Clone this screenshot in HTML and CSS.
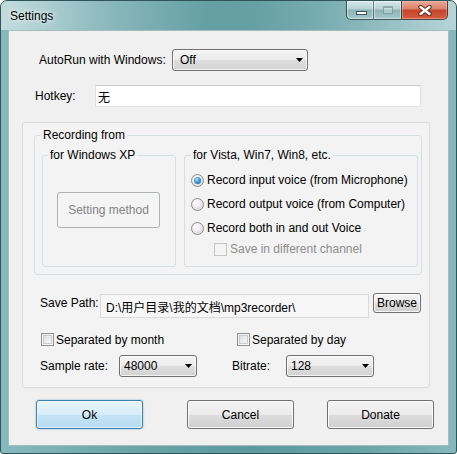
FILE: index.html
```html
<!DOCTYPE html>
<html>
<head>
<meta charset="utf-8">
<title>Settings</title>
<link rel="stylesheet" href="styles.css">
</head>
<body>
<div class="window">
  <div class="titlebar">
    <span class="title">Settings</span>
    <div class="caption">
      <span class="cbtn cmin"><span class="min-glyph"></span></span>
      <span class="cbtn cmax"><span class="max-glyph"></span></span>
      <span class="cbtn cclose">
        <svg width="14" height="11" viewBox="0 0 14 11">
          <path d="M2.5 2 L11.5 9 M11.5 2 L2.5 9" stroke="#5a2a22" stroke-width="4.4" stroke-linecap="round"/>
          <path d="M2.5 2 L11.5 9 M11.5 2 L2.5 9" stroke="#ffffff" stroke-width="2.4" stroke-linecap="round"/>
        </svg>
      </span>
    </div>
  </div>
  <div class="client">
    <div class="row autorun">
      <span class="lbl lbl-autorun">AutoRun with Windows:</span>
      <div class="combo combo-autorun"><span>Off</span><svg class="arrow" width="7" height="4" viewBox="0 0 7 4"><polygon points="0,0 7,0 3.5,4" fill="#000"/></svg></div>
    </div>
    <div class="row hotkey">
      <span class="lbl lbl-hotkey">Hotkey:</span>
      <div class="textbox hotkey-box">无</div>
    </div>
    <div class="panel">
      <div class="group group-main">
        <span class="gtitle main-title">Recording from</span>
        <div class="subrow">
          <div class="group sub-xp">
            <span class="gtitle xp-title">for Windows XP</span>
            <div class="setting-btn">Setting method</div>
          </div>
          <div class="group sub-vista">
            <span class="gtitle vista-title">for Vista, Win7, Win8, etc.</span>
            <div class="opt opt-first"><span class="radio on"><span class="dot"></span></span><span>Record input voice (from Microphone)</span></div>
            <div class="opt"><span class="radio"></span><span>Record output voice (from Computer)</span></div>
            <div class="opt"><span class="radio"></span><span>Record both in and out Voice</span></div>
            <div class="opt sub-check"><span class="cb disabled"></span><span class="disabled-text">Save in different channel</span></div>
          </div>
        </div>
      </div>
      <div class="save-row">
        <span class="lbl lbl-save">Save Path:</span>
        <div class="textbox path-box">D:\用户目录\我的文档\mp3recorder\</div>
        <div class="btn browse">Browse</div>
      </div>
      <div class="checks-row">
        <div class="check-item check-month"><span class="cb"></span><span>Separated by month</span></div>
        <div class="check-item"><span class="cb"></span><span>Separated by day</span></div>
      </div>
      <div class="sample-row">
        <span class="lbl lbl-sample">Sample rate:</span>
        <div class="combo combo-sample"><span>48000</span><svg class="arrow" width="7" height="4" viewBox="0 0 7 4"><polygon points="0,0 7,0 3.5,4" fill="#000"/></svg></div>
        <span class="lbl lbl-bitrate">Bitrate:</span>
        <div class="combo combo-bitrate"><span>128</span><svg class="arrow" width="7" height="4" viewBox="0 0 7 4"><polygon points="0,0 7,0 3.5,4" fill="#000"/></svg></div>
      </div>
    </div>
    <div class="buttons">
      <div class="btn big btn-ok">Ok</div>
      <div class="btn big btn-cancel">Cancel</div>
      <div class="btn big btn-donate">Donate</div>
    </div>
  </div>
</div>
</body>
</html>
```
FILE: styles.css
```css
* { box-sizing: border-box; }

body {
  margin: 0;
  font-family: "Liberation Sans", Arial, "Noto Sans CJK SC", sans-serif;
  font-size: 12px;
  color: #000;
  background: #ffffff;
}

.window {
  width: 457px;
  height: 454px;
  border: 1px solid #2f5459;
  border-radius: 7px 7px 3px 3px;
  background: linear-gradient(to right, #86b9bd 0%, #6aa4a9 30%, #5c9a9f 55%, #6aa5aa 80%, #86b9bd 100%);
  padding: 0 7px 7px 7px;
  display: flex;
  flex-direction: column;
  overflow: hidden;
}

.titlebar {
  height: 29px;
  margin: 0 -7px;
  padding: 0 8px 0 9px;
  display: flex;
  align-items: flex-start;
  background: linear-gradient(to right, rgba(255,255,255,0.5) 0%, rgba(255,255,255,0.22) 20%, rgba(255,255,255,0.02) 45%, rgba(255,255,255,0.12) 70%, rgba(255,255,255,0.4) 100%);
}

.title {
  margin-top: 8px;
  line-height: 15px;
  font-size: 12px;
  color: #000;
  text-shadow: 0 0 5px rgba(255,255,255,0.95), 0 0 9px rgba(255,255,255,0.7);
}

.caption {
  margin-left: auto;
  display: flex;
}

.cbtn {
  height: 19px;
  border: 1px solid rgba(28, 52, 56, 0.8);
  border-top: none;
  display: flex;
  align-items: center;
  justify-content: center;
}

.cmin {
  width: 27px;
  border-right: none;
  border-radius: 0 0 0 5px;
  background: linear-gradient(#d9eaeb 0%, #b6d1d3 45%, #8db3b6 50%, #a5c8cb 100%);
  box-shadow: inset 0 0 0 1px rgba(255,255,255,0.45);
}

.cmax {
  width: 28px;
  border-right: none;
  border-left-color: rgba(28, 52, 56, 0.55);
  background: linear-gradient(#d9eaeb 0%, #b6d1d3 45%, #8db3b6 50%, #a5c8cb 100%);
  box-shadow: inset 0 0 0 1px rgba(255,255,255,0.45);
}

.cclose {
  width: 47px;
  border-radius: 0 0 5px 0;
  background: linear-gradient(#eba999 0%, #dc8068 45%, #c5432a 50%, #d65c3c 100%);
  box-shadow: inset 0 0 0 1px rgba(255,200,190,0.45);
}

.min-glyph {
  width: 11px;
  height: 4px;
  margin-top: 6px;
  margin-left: 2px;
  background: #ffffff;
  border: 1px solid #3c5357;
}

.max-glyph {
  width: 10px;
  height: 8px;
  border: 1px solid rgba(70, 100, 104, 0.45);
  border-top-width: 2px;
  background: rgba(255,255,255,0.25);
}

.client {
  flex: 1;
  background: #f0f0f0;
  border: 1px solid #a5bcbe;
  display: flex;
  flex-direction: column;
}

.row {
  display: flex;
  align-items: center;
}

.autorun {
  margin-top: 18px;
  padding-left: 30px;
  height: 22px;
}

.lbl-autorun { width: 133px; }

.combo {
  height: 22px;
  border: 1px solid #707070;
  border-radius: 3px;
  background: linear-gradient(#f3f3f3 0%, #ececec 50%, #dedede 51%, #d2d2d2 100%);
  box-shadow: inset 0 0 0 1px rgba(255,255,255,0.75);
  display: flex;
  align-items: center;
  justify-content: space-between;
  padding: 0 4px 0 4px;
}

.combo-autorun {
  width: 136px;
  padding-left: 7px;
}

.arrow { flex: none; }

.hotkey {
  margin-top: 14px;
  padding-left: 26px;
}

.lbl-hotkey { width: 60px; }

.textbox {
  height: 22px;
  background: #ffffff;
  border: 1px solid;
  border-color: #c9c9c9 #e0e0e0 #e6e6e6 #e0e0e0;
  padding-left: 2px;
  display: flex;
  align-items: center;
  font-family: "Liberation Sans", Arial, "Noto Sans CJK SC", sans-serif;
}

.hotkey-box { width: 326px; }

.panel {
  margin: 15px 0 0 13px;
  width: 408px;
  height: 266px;
  border: 1px solid #dcdcdc;
  border-radius: 3px;
  background: #f3f3f3;
  padding: 12px 0 0 11px;
}

.group {
  border: 1px solid #d5dee3;
  border-radius: 3px;
}

.group-main {
  width: 388px;
  height: 140px;
}

.gtitle {
  display: block;
  width: fit-content;
  margin-top: -8px;
  padding: 0 2px;
  line-height: 14px;
  background: #f3f3f3;
}

.main-title { margin-left: 6px; }

.subrow {
  display: flex;
  gap: 8px;
  margin: 13px 0 0 7px;
}

.sub-xp {
  width: 134px;
  height: 112px;
}

.sub-vista {
  width: 234px;
  height: 112px;
}

.xp-title { margin-left: 5px; }
.vista-title { margin-left: 6px; }

.setting-btn {
  margin: 30px 0 0 14px;
  width: 103px;
  height: 36px;
  border: 1px solid #adb2b5;
  border-radius: 3px;
  background: #f4f4f4;
  color: #838383;
  display: flex;
  align-items: center;
  justify-content: center;
}

.opt {
  display: flex;
  align-items: center;
  height: 16px;
  margin: 8px 0 0 6px;
}

.opt-first { margin-top: 10px; }

.radio {
  flex: none;
  width: 13px;
  height: 13px;
  margin-right: 3px;
  border-radius: 50%;
  border: 1px solid #8c8c8c;
  background: radial-gradient(circle at 40% 35%, #ffffff 0%, #ececec 45%, #cfcfcf 100%);
  display: flex;
  align-items: center;
  justify-content: center;
}

.dot {
  width: 7px;
  height: 7px;
  border-radius: 50%;
  background: radial-gradient(circle at 40% 35%, #aee3fb 0%, #3f9bd6 45%, #0e4f8c 100%);
}

.sub-check { margin: 5px 0 0 29px; }

.cb {
  flex: none;
  width: 13px;
  height: 13px;
  margin-right: 3px;
  border: 1px solid #8f8f8f;
  background: linear-gradient(135deg, #d5d7da 0%, #eeeeee 55%, #fdfdfd 100%);
  box-shadow: inset 0 0 0 1px #f7f7f7, inset 0 0 0 2px #c8cbcf;
}

.cb.disabled {
  border-color: #c4c4c4;
  background: #f4f4f4;
  box-shadow: none;
}

.disabled-text { color: #8d8d8d; }

.save-row {
  display: flex;
  align-items: flex-start;
  margin-top: 18px;
  height: 25px;
}

.lbl-save {
  margin-left: 6px;
  width: 60px;
  line-height: 20px;
}

.path-box {
  width: 269px;
  height: 24px;
  margin-top: 1px;
  padding-left: 5px;
  background: #f7f7f7;
  border-color: #dadada;
}

.btn {
  border: 1px solid #707070;
  border-radius: 3px;
  background: linear-gradient(#f3f3f3 0%, #ebebeb 50%, #dddddd 51%, #cfcfcf 100%);
  box-shadow: inset 0 0 0 1px rgba(255,255,255,0.85);
  display: flex;
  align-items: center;
  justify-content: center;
}

.browse {
  margin-left: 4px;
  width: 48px;
  height: 20px;
}

.checks-row {
  display: flex;
  align-items: center;
  margin-top: 15px;
  height: 13px;
}

.check-item {
  display: flex;
  align-items: center;
}

.check-item .cb { margin-right: 2px; }

.check-month {
  margin-left: 7px;
  width: 196px;
}

.sample-row {
  display: flex;
  align-items: center;
  margin-top: 9px;
  height: 22px;
}

.lbl-sample {
  margin-left: 6px;
  width: 79px;
}

.combo-sample { width: 78px; }

.lbl-bitrate {
  margin-left: 35px;
  width: 54px;
}

.combo-bitrate { width: 88px; }

.buttons {
  display: flex;
  margin-top: 12px;
}

.big {
  width: 107px;
  height: 29px;
}

.btn-ok {
  margin-left: 27px;
  border-color: #3c7fb1;
  background: linear-gradient(#e6f4fb 0%, #d8eef9 50%, #c4e4f5 51%, #b6dbef 100%);
  box-shadow: inset 0 0 0 1px rgba(255,255,255,0.6), 0 0 2px rgba(60,127,177,0.6);
}

.btn-cancel { margin-left: 44px; }
.btn-donate { margin-left: 33px; }
```
